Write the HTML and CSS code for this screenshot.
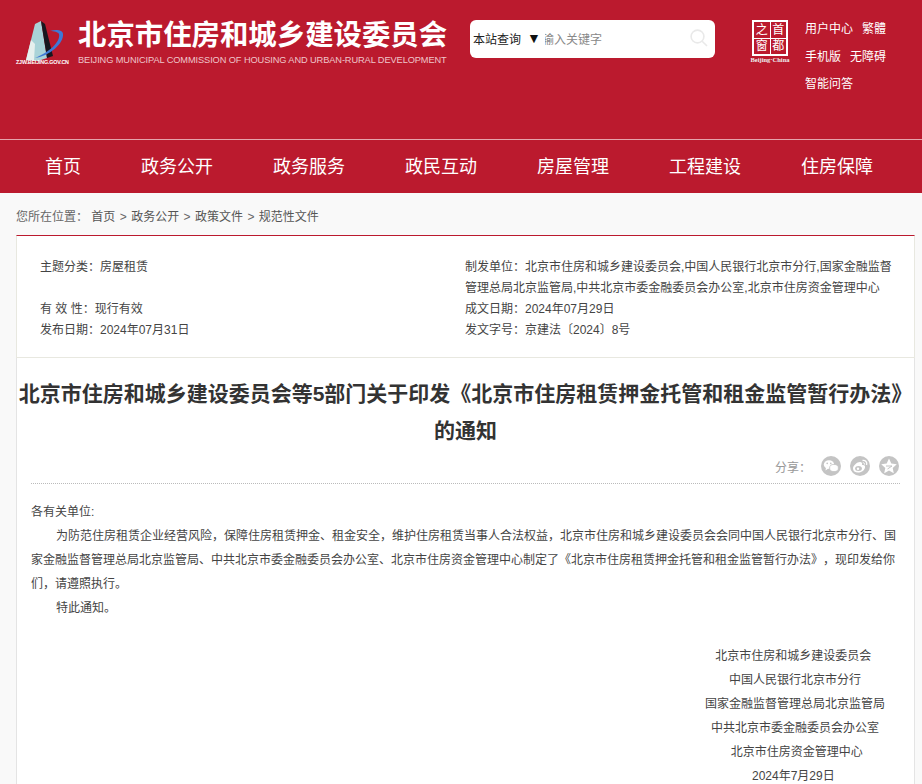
FILE: index.html
```html
<!DOCTYPE html>
<html lang="zh-CN">
<head>
  <meta charset="UTF-8">
  <title>北京市住房和城乡建设委员会</title>
  <link rel="stylesheet" href="styles.css">
</head>
<body>
  <header class="header">
    <div class="logo">
      <div class="logo-mark">
        <svg width="56" height="46" viewBox="0 0 56 46">
          <path d="M12 40 L21 4 L27 1 L33 38 L24 41 Z" fill="#a9d3d8"/>
          <path d="M12 40 L17 20 L21 24 L20 40 Z" fill="#e6f0ee"/>
          <path d="M27 1 L31 4 L39 36 L33 38 Z" fill="#17171f"/>
          <path d="M21 38 C34 33 47 22 45 14 C44 12 40 11 36 11 C42 9 49 10 49 14 C50 23 36 36 21 38 Z" fill="#3f78d6"/>
        </svg>
        <span class="logo-url">ZJW.BEIJING.GOV.CN</span>
      </div>
      <div class="logo-text">
        <div class="logo-cn">北京市住房和城乡建设委员会</div>
        <div class="logo-en">BEIJING MUNICIPAL COMMISSION OF HOUSING AND URBAN-RURAL DEVELOPMENT</div>
      </div>
    </div>
    <div class="search">
      <span class="search-scope">本站查询</span>
      <span class="search-arrow">▼</span>
      <span class="search-input">输入关键字</span>
      <svg class="search-icon" width="18" height="18" viewBox="0 0 18 18" fill="none" stroke="#e9e9e9" stroke-width="1.6">
        <circle cx="7.5" cy="7.5" r="6.4"/>
        <path d="M12.2 12.2 L17 17"/>
      </svg>
    </div>
    <div class="capital">
      <div class="capital-box">
        <span>之</span><span>首</span><span>窗</span><span>都</span>
      </div>
      <div class="capital-en">Beijing·China</div>
    </div>
    <div class="toplinks">
      <div class="toplinks-row"><a>用户中心</a><a>繁體</a></div>
      <div class="toplinks-row"><a>手机版</a><a>无障碍</a></div>
      <div class="toplinks-row"><a>智能问答</a></div>
    </div>
  </header>

  <nav class="nav">
    <a>首页</a>
    <a>政务公开</a>
    <a>政务服务</a>
    <a>政民互动</a>
    <a>房屋管理</a>
    <a>工程建设</a>
    <a>住房保障</a>
  </nav>

  <main class="main">
    <div class="crumbs">
      <span class="crumbs-label">您所在位置：</span>
      <a>首页</a><i>&gt;</i><a>政务公开</a><i>&gt;</i><a>政策文件</a><i>&gt;</i><a>规范性文件</a>
    </div>

    <section class="info">
      <div class="info-col">
        <p class="info-tall">主题分类：房屋租赁</p>
        <p>有 效 性：现行有效</p>
        <p>发布日期：2024年07月31日</p>
      </div>
      <div class="info-col">
        <p>制发单位：北京市住房和城乡建设委员会,中国人民银行北京市分行,国家金融监督管理总局北京监管局,中共北京市委金融委员会办公室,北京市住房资金管理中心</p>
        <p>成文日期：2024年07月29日</p>
        <p>发文字号：京建法〔2024〕8号</p>
      </div>
    </section>

    <article class="article">
      <h1>北京市住房和城乡建设委员会等5部门关于印发《北京市住房租赁押金托管和租金监管暂行办法》的通知</h1>
      <div class="share">
        <span class="share-label">分享：</span>
        <span class="share-btn">
          <svg width="20" height="20" viewBox="0 0 20 20" fill="#fff">
            <ellipse cx="8" cy="8.5" rx="5.2" ry="4.3"/>
            <path d="M5 11.5 L4.5 14.5 L8 12 Z"/>
            <ellipse cx="13" cy="12" rx="4.4" ry="3.6" stroke="#c4c4c4" stroke-width="0.8"/>
            <circle cx="6.2" cy="7.4" r="0.8" fill="#c4c4c4"/>
            <circle cx="9.8" cy="7.4" r="0.8" fill="#c4c4c4"/>
          </svg>
        </span>
        <span class="share-btn">
          <svg width="20" height="20" viewBox="0 0 20 20" fill="none" stroke="#fff">
            <path d="M3 12.5 C3 9.5 7 6 10 6 C12 6 12.6 7.4 12 9 C14 8.6 15.4 9.4 15 11.4 C14.6 14.4 11 16.5 8 16.5 C5 16.5 3 15 3 12.5 Z" fill="#fff" stroke="none"/>
            <ellipse cx="8.5" cy="12.6" rx="3.4" ry="2.5" fill="#c4c4c4" stroke="none"/>
            <circle cx="8" cy="12.8" r="1.2" fill="#fff" stroke="none"/>
            <path d="M12.5 4.5 C15.5 4 17.4 6 16.6 9" stroke-width="1.3"/>
            <path d="M12.8 6.8 C14 6.6 14.9 7.4 14.6 8.6" stroke-width="1"/>
          </svg>
        </span>
        <span class="share-btn">
          <svg width="20" height="20" viewBox="0 0 20 20" fill="#fff">
            <path d="M10 2.5 L12.3 7.6 L17.8 8.2 L13.7 11.9 L14.8 17.3 L10 14.6 L5.2 17.3 L6.3 11.9 L2.2 8.2 L7.7 7.6 Z"/>
            <path d="M7 10 H13 L8.5 13" stroke="#c4c4c4" fill="none"/>
          </svg>
        </span>
      </div>
      <div class="body-text">
        <p>各有关单位:</p>
        <p class="indent">为防范住房租赁企业经营风险，保障住房租赁押金、租金安全，维护住房租赁当事人合法权益，北京市住房和城乡建设委员会会同中国人民银行北京市分行、国家金融监督管理总局北京监管局、中共北京市委金融委员会办公室、北京市住房资金管理中心制定了《北京市住房租赁押金托管和租金监管暂行办法》，现印发给你们，请遵照执行。</p>
        <p class="indent">特此通知。</p>
      </div>
      <div class="sign">
        <p>北京市住房和城乡建设委员会&nbsp;</p>
        <p>中国人民银行北京市分行</p>
        <p>国家金融监督管理总局北京监管局</p>
        <p>中共北京市委金融委员会办公室</p>
        <p>&nbsp;北京市住房资金管理中心</p>
        <p>2024年7月29日&nbsp;</p>
      </div>
    </article>
  </main>
</body>
</html>
```

FILE: styles.css
```css
html, body {
  margin: 0;
  height: 784px;
  overflow: hidden;
}

body {
  font-family: "Liberation Sans", "Noto Sans CJK SC", sans-serif;
  font-size: 12px;
  color: #444;
  background: #f9f9f9;
  text-spacing-trim: space-all;
}

p {
  margin: 0;
}

.header {
  display: flex;
  height: 139px;
  background: #bb1a2e;
  border-bottom: 1px solid #e5a3ab;
}

.logo {
  display: flex;
  width: 455px;
  padding: 15px 0 0 14px;
  box-sizing: border-box;
}

.logo-mark {
  width: 56px;
  position: relative;
  margin-top: 5px;
}

.logo-mark svg {
  display: block;
}

.logo-url {
  position: absolute;
  left: 2px;
  top: 39px;
  font-size: 5.4px;
  font-weight: bold;
  color: #fff;
  white-space: nowrap;
  letter-spacing: -0.2px;
}

.logo-text {
  margin-left: 8px;
  color: #fff;
}

.logo-cn {
  font-family: "Noto Sans CJK SC", sans-serif;
  font-size: 28.4px;
  font-weight: bold;
  line-height: 36px;
  white-space: nowrap;
}

.logo-en {
  font-size: 9.25px;
  line-height: 12px;
  margin-top: 3px;
  color: #efc6cb;
  white-space: nowrap;
  letter-spacing: -0.1px;
}

.search {
  display: flex;
  align-items: center;
  width: 245px;
  height: 38px;
  margin: 20px 0 0 15px;
  padding: 0 4px 2px 3px;
  box-sizing: border-box;
  background: #fff;
  border-radius: 6px;
}

.search-scope {
  color: #222;
}

.search-arrow {
  width: 12px;
  margin-left: 6px;
  font-size: 14px;
  line-height: 1;
  color: #111;
}

.search-input {
  width: 58px;
  margin-left: 6px;
  margin-right: auto;
  color: #888;
  overflow: hidden;
  white-space: nowrap;
  text-indent: -3px;
}

.search-icon {
  margin-right: 3px;
}

.capital {
  width: 40px;
  margin: 20px 0 0 35px;
}

.capital-box {
  display: grid;
  grid-template-columns: 1fr 1fr;
  grid-template-rows: 1fr 1fr;
  width: 36px;
  height: 36px;
  margin-left: 2px;
  padding: 2px;
  gap: 1px;
  box-sizing: border-box;
  background: #fff;
}

.capital-box span {
  display: flex;
  align-items: center;
  justify-content: center;
  background: #bb1a2e;
  color: #fff;
  font-size: 12px;
  line-height: 1;
}

.capital-en {
  font-family: "Liberation Serif", serif;
  font-size: 6.5px;
  font-weight: bold;
  color: #eee;
  text-align: center;
  margin-top: 0;
  white-space: nowrap;
}

.toplinks {
  margin: 17px 0 0 15px;
  color: #fff;
}

.toplinks-row {
  display: flex;
  gap: 9px;
  height: 27.5px;
  line-height: 25px;
  white-space: nowrap;
}

.nav {
  display: flex;
  height: 53px;
  padding-left: 15px;
  background: #bb1a2e;
}

.nav a {
  padding: 0 30px;
  color: #fff;
  font-size: 18px;
  line-height: 54px;
  white-space: nowrap;
}

.main {
  padding: 0 7px 0 16px;
}

.crumbs {
  height: 42px;
  line-height: 49px;
  color: #666;
}

.crumbs-label {
  margin-right: 0;
}

.crumbs a {
  color: #555;
}

.crumbs i {
  font-style: normal;
  margin: 0 4.4px;
}

.info {
  display: flex;
  height: 123px;
  padding-top: 21px;
  box-sizing: border-box;
  background: #fff;
  border-top: 1px solid #bb1a2e;
  border-left: 1px solid #e8e8e0;
  border-right: 1px solid #e8e8e0;
  border-bottom: 1px solid #e8e8e0;
}

.info-col {
  line-height: 21px;
}

.info-col:first-child {
  width: 448px;
  padding-left: 23px;
  box-sizing: border-box;
}

.info-col:last-child {
  width: 432px;
}

.info-tall {
  margin-bottom: 21px;
}

.article {
  height: 430px;
  padding: 0 14px;
  background: #fff;
  border-left: 1px solid #e4e4e4;
  border-right: 1px solid #e4e4e4;
}

.article h1 {
  margin: 0 -14px;
  padding-top: 17px;
  font-size: 21px;
  line-height: 37px;
  font-weight: bold;
  text-align: center;
  color: #333;
}

.share {
  display: flex;
  align-items: center;
  justify-content: flex-end;
  height: 34px;
  padding-right: 1px;
  border-bottom: 1px dotted #bbb;
  color: #999;
}

.share-label {
  margin-right: 1px;
}

.share-btn {
  display: flex;
  align-items: center;
  justify-content: center;
  width: 20px;
  height: 20px;
  margin-left: 9px;
  border-radius: 50%;
  background: #c4c4c4;
}

.body-text {
  margin-top: 16px;
  line-height: 24px;
  color: #444;
}

.indent {
  text-indent: 25px;
}

.sign {
  margin-top: 24px;
  margin-left: 644px;
  width: 240px;
  line-height: 24px;
  text-align: center;
}
```
